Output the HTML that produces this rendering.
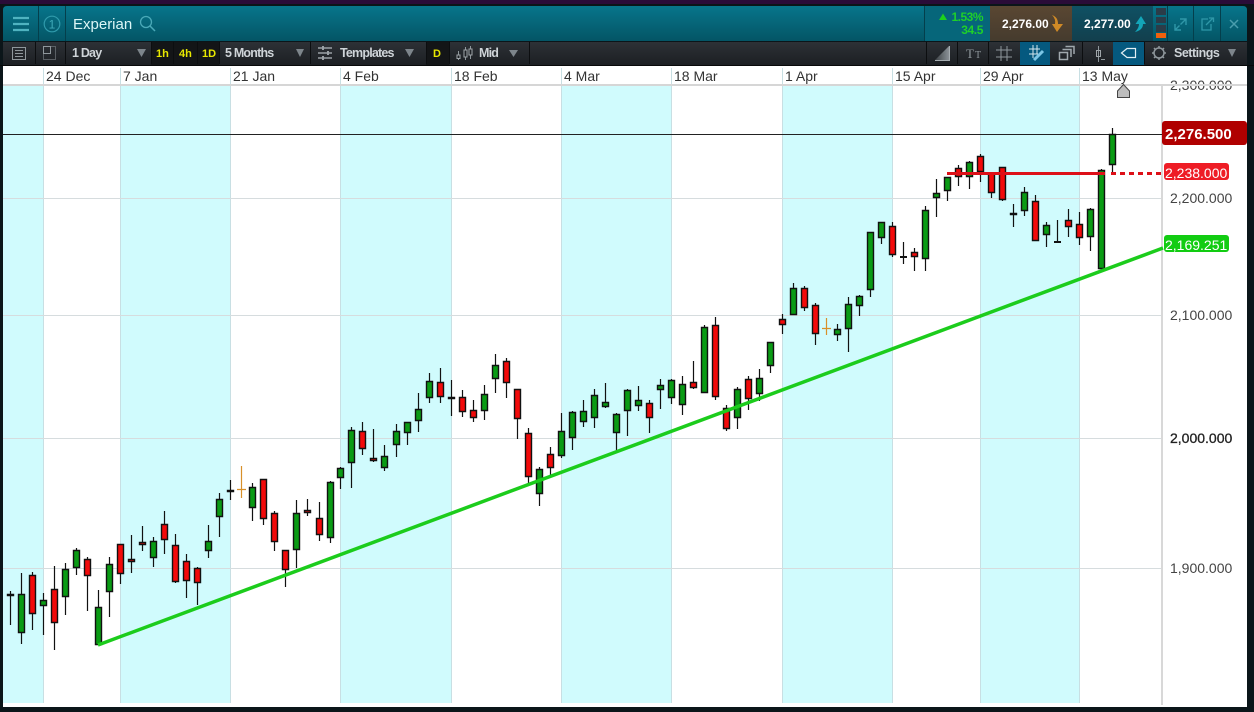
<!DOCTYPE html>
<html lang="en"><head><meta charset="utf-8"><title>Experian</title>
<style>
html,body{margin:0;padding:0;width:1254px;height:712px;overflow:hidden;background:#0b1519}
svg{display:block;font-family:"Liberation Sans",sans-serif}
.tb{font-size:12.5px;font-weight:bold;fill:#cfd4d8;letter-spacing:-.8px}
.y{font-size:11px;font-weight:bold;fill:#e8e800}
.d{font-size:14px;fill:#333}
.a{font-size:14px;fill:#444}
.ic{fill:none;stroke:#8f979c;stroke-width:1}
.tri{fill:#7d858b}
.sep{stroke:#0c0e10;stroke-width:1}
</style></head><body>
<svg width="1254" height="712" viewBox="0 0 1254 712" xmlns="http://www.w3.org/2000/svg">
<defs>
<linearGradient id="teal" x1="0" y1="0" x2="0" y2="1"><stop offset="0" stop-color="#07758b"/><stop offset="1" stop-color="#045565"/></linearGradient>
<linearGradient id="tool" x1="0" y1="0" x2="0" y2="1"><stop offset="0" stop-color="#2d3136"/><stop offset="1" stop-color="#1c1f23"/></linearGradient>
<linearGradient id="sell" x1="0" y1="0" x2="0" y2="1"><stop offset="0" stop-color="#5a4732"/><stop offset="1" stop-color="#453b2e"/></linearGradient>
<linearGradient id="buy" x1="0" y1="0" x2="0" y2="1"><stop offset="0" stop-color="#0f5164"/><stop offset="1" stop-color="#123f4d"/></linearGradient>
<linearGradient id="wedge" x1="0" y1="0" x2="1" y2="0"><stop offset="0" stop-color="#3c4145"/><stop offset="1" stop-color="#8a9196"/></linearGradient>
</defs>
<rect width="1254" height="712" fill="#0b1519"/>
<rect width="1254" height="4" fill="#2a0c38"/>
<!-- top bar -->
<path d="M3 41V10q0-4 4-4H1243q4 0 4 4V41z" fill="url(#teal)"/>
<rect x="925" y="6" width="65" height="35" fill="#06667a"/>
<rect x="990" y="6" width="82" height="35" fill="url(#sell)"/>
<rect x="1072" y="6" width="81" height="35" fill="url(#buy)"/>
<path d="M38.5 6V41M65.5 6V41M924.5 6V41M1167.5 6V41M1193.5 6V41M1220.5 6V41" stroke="#043f4c" fill="none"/>
<path d="M13 18H29M13 24H29M13 30H29" stroke="#4fb3c0" stroke-width="2.2" fill="none"/>
<circle cx="52" cy="24" r="7.800" fill="none" stroke="#2f9aab" stroke-width="1.2"/>
<text x="52" y="28.5" font-size="12" fill="#3fa9b8" text-anchor="middle">1</text>
<text x="73" y="29" font-size="15" fill="#dcf6f6">Experian</text>
<circle cx="146" cy="22" r="5.5" fill="none" stroke="#4aa9b8" stroke-width="1.3"/>
<path d="M150 26L155 31" stroke="#4aa9b8" stroke-width="1.5"/>
<path d="M939 20L943 13.500L947 20z" fill="#1dd11d"/>
<text x="983" y="21" font-size="12" font-weight="bold" fill="#1fd02a" text-anchor="end" letter-spacing="-.5">1.53%</text>
<text x="983" y="34" font-size="12" font-weight="bold" fill="#1fd02a" text-anchor="end" letter-spacing="-.4">34.5</text>
<text x="1002" y="28" font-size="12" font-weight="bold" fill="#fff">2,276.00</text>
<path d="M1052 15Q1058 17 1058 24H1063L1057 32L1052 24H1055Q1056 19 1052 15z" fill="#d08a26"/>
<text x="1084" y="28" font-size="12" font-weight="bold" fill="#fff">2,277.00</text>
<path d="M1135 32Q1139 28 1139 24H1135.500L1141 16L1146 24H1143Q1143 30 1135 32z" fill="#13a5b8"/>
<g fill="#2b3c48"><rect x="1156" y="8" width="10" height="7"/><rect x="1156" y="17" width="10" height="6"/><rect x="1156" y="25" width="10" height="7"/></g><rect x="1156" y="33" width="10" height="5" fill="#f0600c"/>
<path d="M1180 19H1186V25M1186 19L1180.500 24.500M1181 30H1175V24M1175 30L1179.500 25.500" stroke="#2f97a8" stroke-width="1.4" fill="none"/>
<path d="M1211 24V30H1202V19H1208M1206 25L1213 18M1209 18H1213.500V22" stroke="#2f97a8" stroke-width="1.3" fill="none"/>
<path d="M1230 20L1238 28M1238 20L1230 28" stroke="#4a9dad" stroke-width="1.5"/>
<!-- toolbar -->
<rect x="3" y="42" width="1244" height="23" fill="url(#tool)"/>
<rect x="151" y="42" width="68" height="23" fill="#131517"/>
<rect x="426" y="42" width="23" height="23" fill="#131517"/>
<rect x="1020" y="42" width="30" height="23" fill="#05597f"/>
<rect x="1113" y="42" width="31" height="23" fill="#05597f"/>
<path class="sep" d="M35.5 42V64M65.5 42V64M151.5 42V64M173.5 42V64M197.5 42V64M219.5 42V64M310.5 42V64M426.5 42V64M449.5 42V64M529.5 42V64M926.5 42V64M957.5 42V64M988.5 42V64M1082.5 42V64M1144.5 42V64" fill="none"/>
<rect x="12.5" y="47.5" width="13" height="12" class="ic"/><path class="ic" d="M15 50.5H23M15 53.5H23M15 56.5H23"/>
<rect x="43.5" y="46.5" width="12" height="13" class="ic" stroke-dasharray="1 1"/><rect x="43.5" y="46.5" width="7" height="7" class="ic"/>
<text x="72" y="57" class="tb">1 Day</text><path class="tri" d="M137 49H146L141.5 57z"/>
<text x="156" y="57" class="y">1h</text><text x="179" y="57" class="y">4h</text><text x="202" y="57" class="y">1D</text>
<text x="225" y="57" class="tb">5 Months</text><path class="tri" d="M296 49H304L300 57z"/>
<path d="M318 48H332M318 53H332M318 58H332" stroke="#9aa0a5" stroke-width="1.5" fill="none"/><path d="M323 46V50M328 51V55M323 56V60" stroke="#9aa0a5" stroke-width="2"/>
<text x="340" y="57" class="tb">Templates</text><path class="tri" d="M405 49H414L409.5 57z"/>
<text x="433" y="57" class="y">D</text>
<path class="ic" d="M458.5 51V60M465.5 47V60M470.5 46V59"/><rect x="457" y="55" width="3" height="3.5" fill="#1d2024" stroke="#a0a6aa"/><rect x="464" y="50" width="3" height="7" fill="#1d2024" stroke="#a0a6aa"/><rect x="469" y="49" width="3" height="6" fill="#1d2024" stroke="#a0a6aa"/>
<text x="479" y="57" class="tb">Mid</text><path class="tri" d="M509 50H518L513.5 57z"/>
<path d="M935 60L949 46V60z" fill="url(#wedge)"/><path d="M935 60.5H949.5V46" fill="none" stroke="#a6adb1"/>
<text x="966" y="58" font-family="Liberation Serif" font-size="13" fill="#8f979c">T</text><text x="975" y="58" font-family="Liberation Serif" font-size="10" fill="#8f979c">T</text>
<path class="ic" d="M996 50H1012M996 57H1012M1001 46V61M1007 46V61"/>
<path d="M1029 49H1040M1029 54H1038M1033 45V58M1037 45V54" stroke="#d5e6ee" fill="none"/><path d="M1034 60L1043 51" stroke="#7cc6e6" stroke-width="3"/>
<rect x="1059.5" y="52.5" width="8" height="7" fill="none" stroke="#a0a8ad" stroke-width="1.5"/><path fill="none" stroke="#a0a8ad" stroke-width="1.5" d="M1062.5 49.5H1071V57M1065.5 46.5H1074V54"/>
<path class="ic" d="M1098.5 46V62"/><rect x="1096.5" y="50.5" width="4" height="6" fill="none" stroke="#a0a6aa"/><path class="ic" d="M1101 59.500H1105"/>
<path d="M1121.5 53L1127 48.5H1135.5V57.5H1127z" fill="none" stroke="#e3f0f5" stroke-width="1.2"/>
<circle cx="1159" cy="53" r="5" fill="none" stroke="#8f979c" stroke-width="1.5"/><path d="M1159 46V48M1159 58V60M1152 53H1154M1164 53H1166M1154 48L1155.5 49.5M1164 48L1162.5 49.5M1154 58L1155.5 56.5M1164 58L1162.5 56.5" stroke="#8f979c" stroke-width="1.5"/>
<text x="1174" y="57" class="tb" letter-spacing="-.5" style="letter-spacing:-.5px">Settings</text><path class="tri" d="M1228 49H1236L1232 57z"/>
<rect x="0" y="65" width="1254" height="1" fill="#08090a"/>
<!-- chart -->
<rect x="3" y="66" width="1244" height="641" fill="#fff"/>
<g fill="#d0fbfd"><rect x="3" y="85" width="40" height="618"/><rect x="120" y="85" width="110" height="618"/><rect x="340" y="85" width="111" height="618"/><rect x="561" y="85" width="110" height="618"/><rect x="782" y="85" width="110" height="618"/><rect x="980" y="85" width="99" height="618"/></g>
<path d="M43.5 68V703M120.5 68V703M230.5 68V703M340.5 68V703M451.5 68V703M561.5 68V703M671.5 68V703M782.5 68V703M892.5 68V703M980.5 68V703M1079.5 68V703" stroke="#c8dfe3" fill="none"/>
<path d="M3 198.5H1162M3 315.5H1162M3 438.5H1162M3 568.5H1162" stroke="#d6dcde" fill="none"/>
<rect x="1161" y="85" width="2" height="620" fill="#d8d8d8"/>
<g class="d"><text x="46" y="81">24 Dec</text><text x="123" y="81">7 Jan</text><text x="233" y="81">21 Jan</text><text x="343" y="81">4 Feb</text><text x="454" y="81">18 Feb</text><text x="564" y="81">4 Mar</text><text x="674" y="81">18 Mar</text><text x="785" y="81">1 Apr</text><text x="895" y="81">15 Apr</text><text x="983" y="81">29 Apr</text><text x="1082" y="81">13 May</text></g>
<g class="a"><text x="1170" y="90">2,300.000</text><text x="1170" y="203">2,200.000</text><text x="1170" y="320">2,100.000</text><text x="1170" y="443" fill="#222" stroke="#222" stroke-width=".3">2,000.000</text><text x="1170" y="573">1,900.000</text></g>
<rect x="3" y="84" width="1244" height="2" fill="#d6d6d6"/>
<rect x="3" y="134" width="1160" height="1" fill="#222"/>
<!-- wicks -->
<path fill="none" stroke="#111" stroke-width="1.2" d="M10.5 591V625M21.5 573V644M32.5 572V630M43.5 593V635M54.5 566V650M65.5 563V615M76.5 548V575M87.5 557V611M98.5 590V645M109.5 557V617M120.5 544V584M131.5 535V573M142.5 526V551M153.5 537V567M164.5 511V554M175.5 534V583M186.5 554V598M197.5 567V605M208.5 525V558M219.5 493V537M230.5 480V500M252.5 483V521M263.5 479V525M274.5 511V551M285.5 550V587M296.5 500V568M307.5 499V516M319.5 502V541M330.5 481V543M340.5 467V489M351.5 427V488M362.5 422V455M373.5 429V462M384.5 445V471M396.5 424V457M407.5 422V445M418.5 393V432M429.5 373V403M440.5 368V403M451.5 380V416M462.5 390V417M473.5 400V422M484.5 385V420M495.5 354V393M506.5 358V398M517.5 389V439M528.5 428V483M539.5 467V506M550.5 447V475M561.5 413V458M572.5 411V450M583.5 400V427M594.5 389V428M605.5 383V408M616.5 413V451M627.5 389V436M638.5 386V411M649.5 400V433M660.5 379V409M671.5 379V404M682.5 376V415M693.5 361V389M704.5 325V393M715.5 317V400M726.5 405V431M737.5 387V429M748.5 376V410M759.5 369V401M770.5 342V373M782.5 314V334M793.5 283V315M804.5 286V311M815.5 303V345M837.5 324V341M848.5 297V352M859.5 295V316M870.5 232V297M881.5 222V244M892.5 222V257M903.5 242V264M914.5 248V271M925.5 206V271M936.5 179V217M947.5 177V201M958.5 165V186M969.5 161V189M980.5 154V182M991.5 172V198M1002.5 167V201M1013.5 204V227M1024.5 187V216M1035.5 195V241M1046.5 222V247M1057.5 220V243M1068.5 209V237M1079.5 212V245M1090.5 208V251M1101.5 169V270M1112.5 128V173"/>
<path fill="none" stroke="#d8902a" stroke-width="1.2" d="M241.5 466V498M237 489.5H246M826.5 318V335M822 328.5H831"/>
<path fill="none" stroke="#111" stroke-width="2" d="M900 257H907M1054 242H1061"/>
<!-- green bodies -->
<path fill="#0a9b14" stroke="#111" stroke-width="1.4" d="M18.5 594.5h6V632.5h-6zM40.5 600.5h6V605.5h-6zM62.5 569.5h6V596.5h-6zM73.5 550.5h6V567.5h-6zM95.5 607.5h6V644.5h-6zM106.5 564.5h6V591.5h-6zM150.5 541.5h6V557.5h-6zM205.5 541.5h6V550.5h-6zM216.5 499.5h6V516.5h-6zM227.5 490.5h6V491.5h-6zM249.5 487.5h6V507.5h-6zM293.5 513.5h6V549.5h-6zM327.5 482.5h6V537.5h-6zM337.5 468.5h6V477.5h-6zM348.5 430.5h6V462.5h-6zM381.5 456.5h6V467.5h-6zM393.5 431.5h6V444.5h-6zM404.5 422.5h6V432.5h-6zM415.5 409.5h6V420.5h-6zM426.5 381.5h6V397.5h-6zM481.5 394.5h6V410.5h-6zM492.5 365.5h6V378.5h-6zM536.5 469.5h6V493.5h-6zM558.5 431.5h6V455.5h-6zM569.5 412.5h6V437.5h-6zM580.5 411.5h6V421.5h-6zM591.5 395.5h6V417.5h-6zM602.5 402.5h6V406.5h-6zM613.5 414.5h6V432.5h-6zM624.5 390.5h6V410.5h-6zM635.5 400.5h6V405.5h-6zM657.5 385.5h6V389.5h-6zM668.5 380.5h6V397.5h-6zM679.5 384.5h6V404.5h-6zM701.5 327.5h6V392.5h-6zM734.5 389.5h6V417.5h-6zM756.5 378.5h6V393.5h-6zM767.5 342.5h6V365.5h-6zM790.5 288.5h6V314.5h-6zM834.5 329.5h6V334.5h-6zM845.5 304.5h6V328.5h-6zM856.5 296.5h6V305.5h-6zM867.5 232.5h6V289.5h-6zM878.5 222.5h6V237.5h-6zM922.5 210.5h6V258.5h-6zM933.5 193.5h6V197.5h-6zM944.5 177.5h6V190.5h-6zM966.5 162.5h6V176.5h-6zM1021.5 192.5h6V210.5h-6zM1043.5 225.5h6V234.5h-6zM1087.5 209.5h6V236.5h-6zM1098.5 170.5h6V268.5h-6zM1109.5 134.5h6V164.5h-6z"/>
<!-- red bodies -->
<path fill="#f20a0a" stroke="#111" stroke-width="1.4" d="M7.5 594.5h6V595.5h-6zM29.5 575.5h6V613.5h-6zM51.5 589.5h6V622.5h-6zM84.5 559.5h6V575.5h-6zM117.5 544.5h6V573.5h-6zM128.5 559.5h6V561.5h-6zM139.5 542.5h6V544.5h-6zM161.5 524.5h6V539.5h-6zM172.5 545.5h6V581.5h-6zM183.5 561.5h6V580.5h-6zM194.5 568.5h6V582.5h-6zM260.5 479.5h6V518.5h-6zM271.5 513.5h6V541.5h-6zM282.5 550.5h6V569.5h-6zM304.5 510.5h6V512.5h-6zM316.5 518.5h6V534.5h-6zM359.5 431.5h6V448.5h-6zM370.5 458.5h6V460.5h-6zM437.5 382.5h6V396.5h-6zM448.5 397.5h6V398.5h-6zM459.5 397.5h6V411.5h-6zM470.5 410.5h6V417.5h-6zM503.5 361.5h6V382.5h-6zM514.5 389.5h6V418.5h-6zM525.5 433.5h6V476.5h-6zM547.5 454.5h6V467.5h-6zM646.5 403.5h6V417.5h-6zM690.5 382.5h6V387.5h-6zM712.5 325.5h6V396.5h-6zM723.5 408.5h6V428.5h-6zM745.5 379.5h6V398.5h-6zM779.5 319.5h6V324.5h-6zM801.5 288.5h6V307.5h-6zM812.5 305.5h6V333.5h-6zM889.5 226.5h6V254.5h-6zM911.5 252.5h6V256.5h-6zM955.5 168.5h6V176.5h-6zM977.5 156.5h6V171.5h-6zM988.5 173.5h6V192.5h-6zM999.5 167.5h6V199.5h-6zM1010.5 213.5h6V214.5h-6zM1032.5 201.5h6V240.5h-6zM1065.5 220.5h6V226.5h-6zM1076.5 224.5h6V237.5h-6z"/>
<!-- drawings -->
<path d="M98 645L1163 248" stroke="#1ccc1c" stroke-width="3.5" fill="none"/>
<path d="M947 173.5H1105" stroke="#dd1018" stroke-width="3" fill="none"/>
<path d="M1111 173.5H1163" stroke="#dd1018" stroke-width="3" fill="none" stroke-dasharray="5 4"/>
<path d="M1123.5 84.5L1129.5 91V97.5H1117.5V91z" fill="#bdbdbd" stroke="#444"/>
<!-- labels -->
<rect x="1162" y="121" width="85" height="24" rx="3" fill="#b00000"/>
<text x="1165" y="139" font-size="15" font-weight="bold" fill="#fff">2,276.500</text>
<rect x="1164" y="163" width="65" height="17" rx="3" fill="#ee1c25"/>
<text x="1165" y="178" font-size="14" fill="#fff">2,238.000</text>
<rect x="1164" y="235" width="65" height="17" rx="3" fill="#12cc12"/>
<text x="1165" y="250" font-size="14" fill="#fff">2,169.251</text>
</svg>
</body></html>
